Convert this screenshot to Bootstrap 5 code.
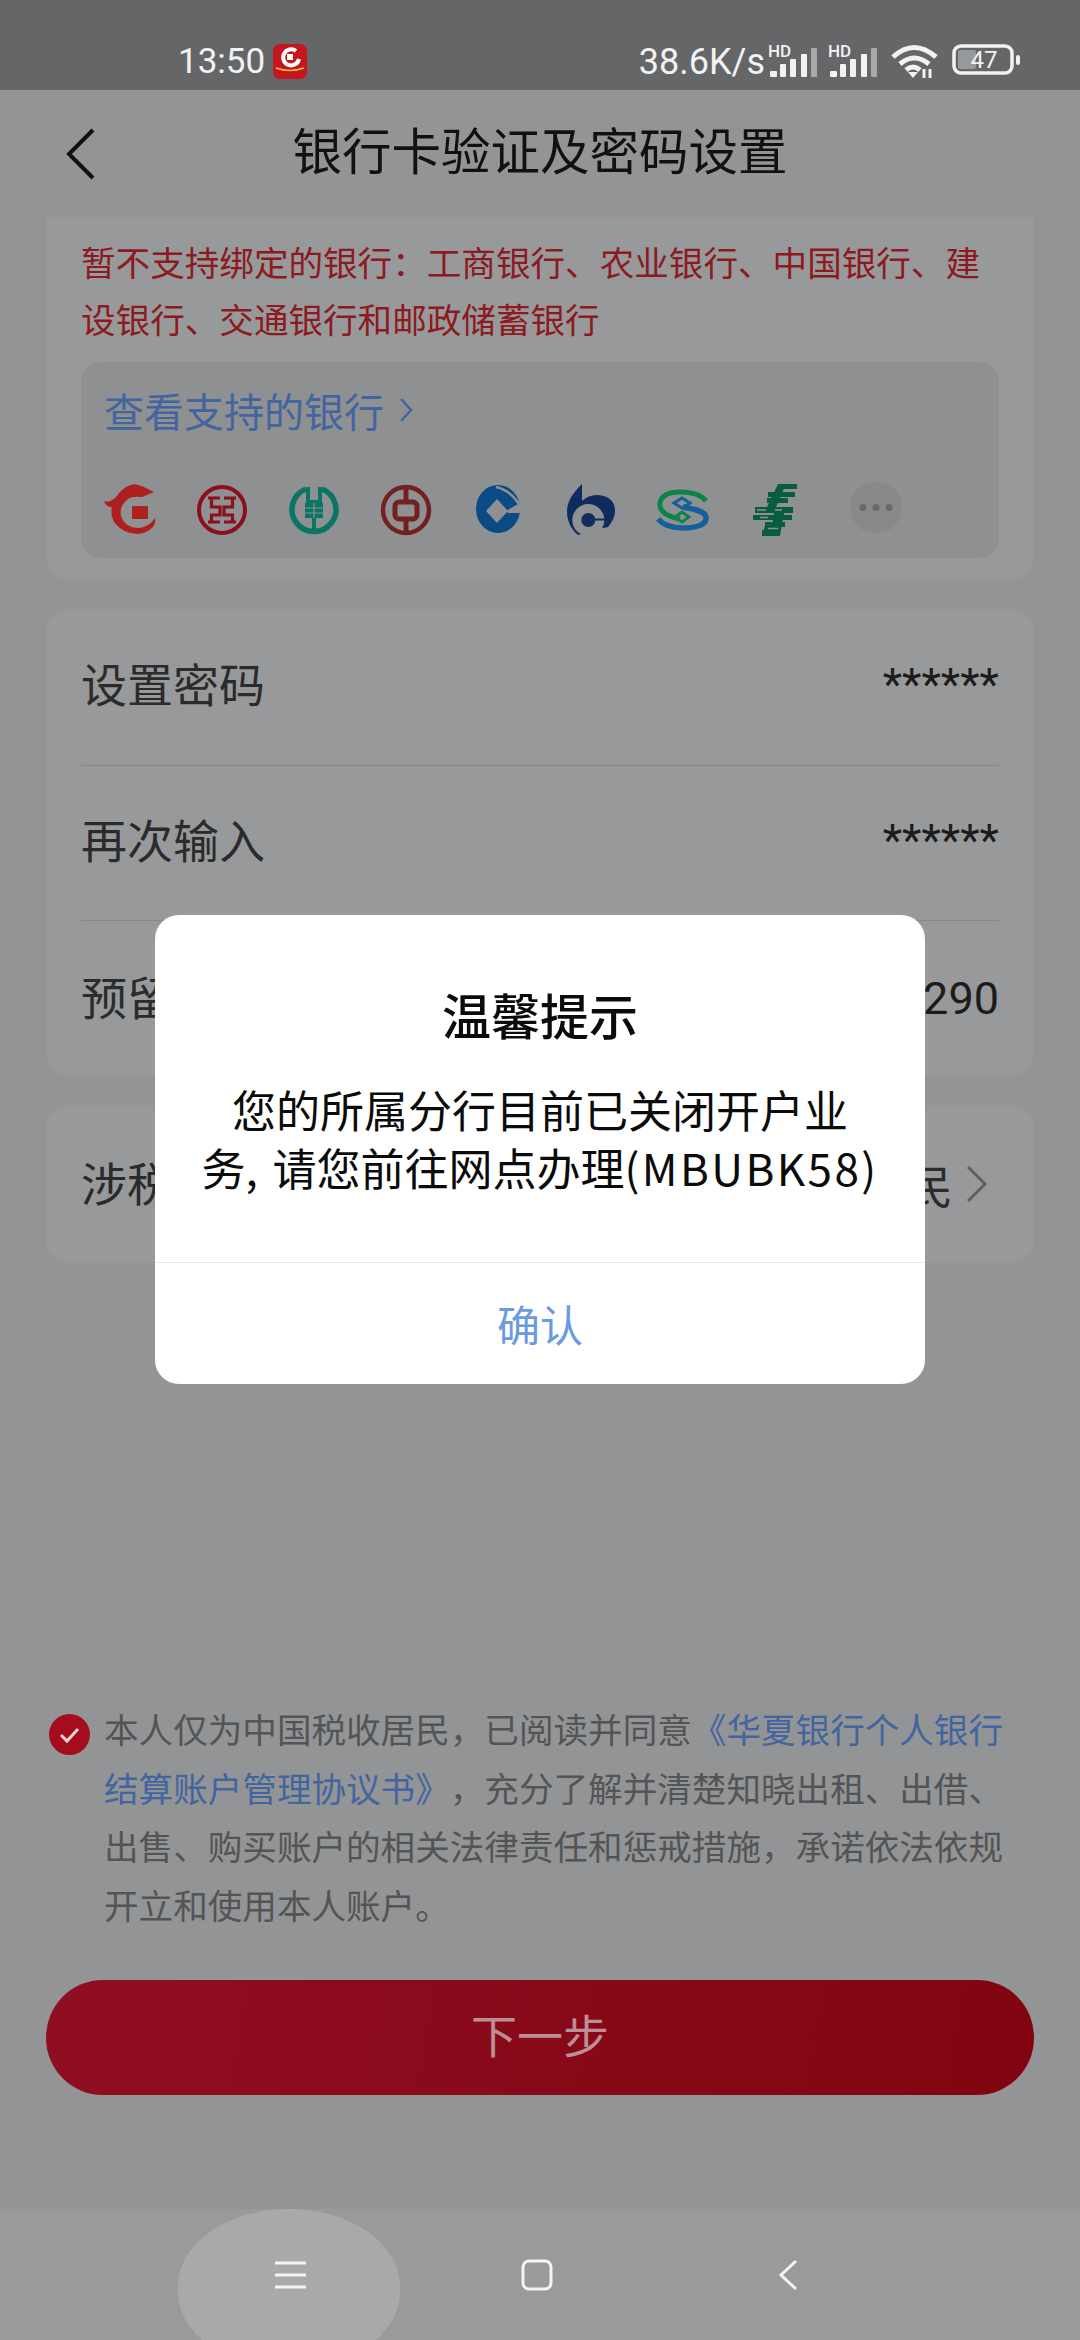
<!DOCTYPE html>
<html lang="zh-CN">

<head>
  <meta charset="UTF-8">
  <title>银行卡验证及密码设置</title>
  <link href="https://cdn.jsdelivr.net/npm/bootstrap@5.3.0/dist/css/bootstrap.min.css" rel="stylesheet">
  <style>
    body {
      background: #939495;
      font-family: "Noto Sans CJK SC", "Noto Sans", sans-serif;
      color: #2b2b2c;
      text-spacing-trim: space-all;
    }

    .screen {
      height: 2340px;
      width: 1080px;
      overflow: hidden;
    }

    .status-bar {
      height: 90px;
      background: #656668;
      color: #f2f2f2;
      font-family: Roboto, sans-serif;
      font-size: 35px;
      padding: 40px 60px 0 178px;
      line-height: 44px;
    }

    .status-bar svg {
      margin-top: 4px;
      overflow: visible;
    }

    .status-speed {
      font-size: 36px;
      margin-right: 3px;
      white-space: nowrap;
    }

    .sig-second {
      margin-left: 11px;
    }

    .wifi-mark {
      margin-left: 14px;
    }

    .battery-mark {
      margin-left: 15px;
    }

    .top-head {
      height: 127px;
      padding-left: 66px;
    }

    .top-title {
      flex-grow: 1;
      font-size: 49.5px;
      line-height: 60px;
      color: #111;
      margin: 0;
      text-align: center;
      padding-right: 95px;
      padding-bottom: 9px;
    }

    .box-card {
      background: #98999b;
      border: 0;
      border-radius: 24px;
      margin: 0 46px 29px;
      padding: 0 35px;
    }

    .box-first {
      border-radius: 0 0 24px 24px;
      padding: 16px 35px 22px;
      height: 363px;
    }

    .warn-text {
      font-size: 34.6px;
      line-height: 57px;
      color: #8c1a20;
    }

    .bank-box {
      background: #8f9092;
      border-radius: 20px;
      height: 196px;
      margin-top: 15px;
      padding: 20px 23px 0;
    }

    .bank-link {
      font-size: 40px;
      line-height: 56px;
      color: #43659f;
    }

    .bank-link svg {
      margin-left: 15px;
    }

    .bank-icons {
      gap: 40px;
      margin-top: 46px;
    }

    .bank-icons svg {
      width: 52px;
      height: 52px;
      flex: none;
      overflow: visible;
    }

    .form-line {
      height: 155px;
      font-size: 46px;
      border-bottom: 1px solid #868789;
      padding-bottom: 4px;
    }

    .form-line:first-child {
      height: 157px;
    }

    .form-line:last-child {
      border-bottom: 0;
      padding-bottom: 0;
    }

    .form-line:only-child {
      height: 158px;
    }

    .form-name {
      margin-bottom: 6px;
    }

    .form-value {
      font-family: Roboto, sans-serif;
      font-size: 45px;
      color: #1c1c1c;
    }

    .tax-arrow {
      margin: 0 11px 0 13px;
    }

    .agree-block {
      margin: 407px 46px 0 49px;
      font-size: 34.6px;
      line-height: 58.5px;
      color: #535456;
      gap: 14px;
    }

    .agree-link {
      color: #43659f;
      text-decoration: none;
    }

    .agree-check {
      width: 41px;
      height: 41px;
      flex: none;
      margin-top: 15px;
    }

    .next-btn {
      display: block;
      width: 988px;
      height: 115px;
      margin: 47px 46px 0;
      padding-bottom: 10px;
      border: 0;
      border-radius: 57px;
      background: linear-gradient(100deg, #900e22, #800510);
      color: #bb8f95;
      font-size: 46px;
    }

    .nav-bottom {
      height: 131px;
      margin-top: auto;
      background: #9a9a9a;
      position: relative;
    }

    .nav-slot {
      position: absolute;
      top: 0;
      bottom: 0;
    }

    .nav-pill {
      left: 178px;
      width: 222px;
      height: 160px;
      bottom: auto;
      background: #a9a9a9;
      border-radius: 50% / 48%;
    }

    .notice {
      position: absolute;
      left: 155px;
      top: 915px;
      width: 770px;
      height: 469px;
      border: 0;
      border-radius: 24px;
      background: #fff;
      color: #0b0b0b;
      text-align: center;
    }

    .notice-title {
      font-size: 49px;
      font-weight: 500;
      line-height: 60px;
      padding-top: 69px;
    }

    .notice-body {
      font-size: 44px;
      line-height: 58px;
      padding-top: 36px;
      height: 218px;
    }

    .notice-latin {
      letter-spacing: 2.4px;
    }

    .notice-comma {
      margin-right: 5px;
    }

    .notice-action {
      border-top: 1px solid #e9e9e9;
      color: #6b9ade;
      font-size: 43px;
      height: 122px;
    }
  </style>
</head>

<body>
  <div class="screen d-flex flex-column position-relative">
    <div class="status-bar d-flex align-items-start">
      <span>13:50</span>
      <svg width="34" height="35" viewBox="0 0 34 35" class="ms-2">
        <rect width="34" height="35" rx="7" fill="#c4161c" />
        <path d="M23 7A8 8 0 1 0 26 15" fill="none" stroke="#fff" stroke-width="4" />
        <rect x="14" y="10" width="6" height="6" fill="#fff" />
        <path d="M3 24Q17 29 31 24" fill="none" stroke="#f0c34a" stroke-width="1.5" />
      </svg>
      <span class="status-speed ms-auto">38.6K/s</span>
      <svg width="49" height="34" viewBox="0 0 49 34">
        <text x="0" y="13" font-family="Roboto, sans-serif" font-size="17" font-weight="500" fill="#f2f2f2">HD</text>
        <g fill="#f2f2f2">
          <rect x="2" y="27" width="7" height="6" rx="1" />
          <rect x="12" y="20" width="6" height="13" rx="1" />
          <rect x="22" y="15" width="6" height="18" rx="1" />
          <rect x="33" y="10" width="6" height="23" rx="1" />
          <rect x="43" y="4" width="6" height="29" rx="1" fill="#a9a9ab" />
        </g>
      </svg>
      <svg width="49" height="34" viewBox="0 0 49 34" class="sig-second">
        <text x="0" y="13" font-family="Roboto, sans-serif" font-size="17" font-weight="500" fill="#f2f2f2">HD</text>
        <g fill="#f2f2f2">
          <rect x="2" y="27" width="7" height="6" rx="1" />
          <rect x="12" y="20" width="6" height="13" rx="1" />
          <rect x="22" y="15" width="6" height="18" rx="1" />
          <rect x="33" y="10" width="6" height="23" rx="1" />
          <rect x="43" y="4" width="6" height="29" rx="1" fill="#a9a9ab" />
        </g>
      </svg>
      <svg width="46" height="34" viewBox="0 0 46 34" class="wifi-mark">
        <g fill="none" stroke="#f2f2f2" stroke-width="5">
          <path d="M2 13Q23 -6 45 13" />
          <path d="M9 20Q23 8 38 20" />
          <path d="M15 26Q22 20 29 26" />
        </g>
        <path d="M17 28L22 34L27 28Z" fill="#f2f2f2" />
        <path d="M33 25V34M39 25V34" stroke="#f2f2f2" stroke-width="3" />
      </svg>
      <svg width="68" height="32" viewBox="0 0 68 32" class="battery-mark">
        <rect x="2" y="2" width="58" height="27" rx="7" fill="none" stroke="#f2f2f2" stroke-width="3.5" />
        <rect x="6" y="6" width="18" height="19" rx="2" fill="#98999b" />
        <text x="32" y="24" text-anchor="middle" font-family="Roboto, sans-serif" font-size="24" fill="#f2f2f2">47</text>
        <rect x="64" y="11" width="4" height="10" rx="2" fill="#f2f2f2" />
      </svg>
    </div>

    <div class="top-head d-flex align-items-center">
      <svg width="29" height="52" viewBox="0 0 29 52">
        <path d="M27 2L3 26L27 50" fill="none" stroke="#111" stroke-width="4" />
      </svg>
      <h1 class="top-title fw-normal">银行卡验证及密码设置</h1>
    </div>

    <div class="box-card box-first card">
      <div class="warn-text">暂不支持绑定的银行：工商银行、农业银行、中国银行、建设银行、交通银行和邮政储蓄银行</div>
      <div class="bank-box">
        <div class="bank-link d-flex align-items-center">查看支持的银行
          <svg width="14" height="26" viewBox="0 0 14 26">
            <path d="M2 2L12 13L2 24" fill="none" stroke="#43659f" stroke-width="2.5" />
          </svg>
        </div>
        <div class="bank-icons d-flex align-items-center">
          <!-- 华夏 -->
          <svg viewBox="0 0 52 52">
            <path fill="#ae2020" d="M0 17Q8 20 15 9Q22 1 31 0L40 3L50 8L38 13Q28 12 24 15Q15 22 17 32Q21 44 35 44Q45 43 51 34Q52 40 49 43Q42 50 33 50Q18 49 10 38Q6 30 8 23Q3 24 0 17Z" />
            <rect x="28" y="22" width="16" height="13" rx="1" fill="#ae2020" />
          </svg>
          <!-- 工行 -->
          <svg viewBox="0 0 52 52">
            <circle cx="26" cy="26" r="23" fill="none" stroke="#8c0f1b" stroke-width="4" />
            <path d="M12 14H24M15.5 14V23H24V31H15.5V38M12 38H24M40 14H28M36.5 14V23H28V31H36.5V38M40 38H28" fill="none" stroke="#8c0f1b" stroke-width="3.2" />
          </svg>
          <!-- 农行 -->
          <svg viewBox="0 0 52 52">
            <path d="M18 5A22 22 0 1 0 34 5" fill="none" stroke="#0b7565" stroke-width="5.5" />
            <path d="M20 3V18H32V3M26 18V47" fill="none" stroke="#0b7565" stroke-width="4" />
            <rect x="17" y="19" width="18" height="15" fill="#0b7565" />
            <path d="M17 24H35M17 29H35M26 19V34" stroke="#8f9092" stroke-width="1.2" />
          </svg>
          <!-- 中行 -->
          <svg viewBox="0 0 52 52">
            <circle cx="26" cy="26" r="23" fill="none" stroke="#74201f" stroke-width="4.5" />
            <rect x="15" y="18" width="22" height="17" rx="4" fill="none" stroke="#74201f" stroke-width="5" />
            <path d="M26 3V18M26 35V49" stroke="#74201f" stroke-width="5" />
          </svg>
          <!-- 建行 -->
          <svg viewBox="0 0 52 52">
            <ellipse cx="26" cy="25" rx="22" ry="24" fill="#0a4a85" />
            <path d="M25 15L36 27L25 39L14 27Z" fill="#8f9092" />
            <path d="M24 3Q38 6 47 20" fill="none" stroke="#8f9092" stroke-width="2.5" />
            <path d="M34 27L46 20H52V29H36Z" fill="#8f9092" />
          </svg>
          <!-- 交行 -->
          <svg viewBox="0 0 52 52">
            <g transform="translate(0,-2)">
              <path fill="#0f2c5e" d="M18 2C10 10 3 18 3 30C3 40 8 48 14 53L30 48L44 45C50 38 51 33 51 28C51 18 42 13 33 13C27 13 22 15 18 19Z" />
              <circle cx="24.3" cy="38" r="16" fill="#8f9092" />
              <circle cx="24.3" cy="38" r="7" fill="#0f2c5e" />
              <path d="M29 37.5H46" stroke="#0f2c5e" stroke-width="2" />
            </g>
          </svg>
          <!-- 民生 -->
          <svg viewBox="0 0 52 52">
            <g transform="translate(0,-2)">
              <path d="M50 19C44 11 33 10 24 10C11 10 3 15 4 24C5 31 14 35 24 37" fill="none" stroke="#0e8348" stroke-width="5" />
              <path d="M2 37C8 44 18 46 27 46C42 46 51 42 50 35C49 29 38 27 27 25" fill="none" stroke="#14609f" stroke-width="5.5" />
              <path d="M26 16L34 21L26 26L18 21Z" fill="none" stroke="#14609f" stroke-width="3" />
              <path d="M26 30L33 35L26 40L19 35Z" fill="none" stroke="#0e8348" stroke-width="3" />
            </g>
          </svg>
          <!-- 邮储 -->
          <svg viewBox="0 0 52 52">
            <g transform="translate(0,-2)">
              <g fill="#0a5c3e">
                <rect x="30" y="2" width="19" height="5" />
                <rect x="20" y="10" width="27" height="5" />
                <rect x="19" y="16" width="21" height="5" />
                <rect x="7" y="25" width="38" height="6" />
                <rect x="5" y="33" width="39" height="5" />
                <rect x="17" y="40" width="20" height="5" />
                <rect x="14" y="48" width="18" height="6" />
                <path d="M30 2H38L28 25H19ZM26 31H36L32 54H14L17 44H24Z" />
              </g>
              <path d="M9 28H18M27 28H34M12 35.5H20M20 46.5H30" stroke="#8f9092" stroke-width="1.5" />
            </g>
          </svg>
          <svg viewBox="0 0 52 52" class="ms-2">
            <circle cx="28" cy="23.5" r="26" fill="#88898a" />
            <g fill="#6a6a6b">
              <circle cx="15" cy="23.5" r="3.5" />
              <circle cx="28" cy="23.5" r="3.5" />
              <circle cx="41" cy="23.5" r="3.5" />
            </g>
          </svg>
        </div>
      </div>
    </div>

    <div class="box-card card">
      <div class="form-line d-flex justify-content-between align-items-center">
        <span class="form-name">设置密码</span><span class="form-value">******</span>
      </div>
      <div class="form-line d-flex justify-content-between align-items-center">
        <span class="form-name">再次输入</span><span class="form-value">******</span>
      </div>
      <div class="form-line d-flex justify-content-between align-items-center">
        <span class="form-name">预留手机号</span><span class="form-value">1290</span>
      </div>
    </div>

    <div class="box-card card">
      <div class="form-line d-flex justify-content-between align-items-center">
        <span class="form-name">涉税居民身份</span>
        <span class="d-flex align-items-center">仅为中国税收居民
          <svg class="tax-arrow" width="22" height="38" viewBox="0 0 22 38">
            <path d="M2 2L19 19L2 36" fill="none" stroke="#5f6062" stroke-width="3" />
          </svg>
        </span>
      </div>
    </div>

    <div class="agree-block d-flex">
      <svg class="agree-check" viewBox="0 0 41 41">
        <circle cx="20.5" cy="20.5" r="20.5" fill="#a30d1c" />
        <path d="M12 21L18 27L29 15" fill="none" stroke="#e9d3d5" stroke-width="3" />
      </svg>
      <div>本人仅为中国税收居民，已阅读并同意<a class="agree-link" href="#">《华夏银行个人银行结算账户管理协议书》</a>，充分了解并清楚知晓出租、出借、出售、购买账户的相关法律责任和惩戒措施，承诺依法依规开立和使用本人账户。</div>
    </div>

    <button class="next-btn" type="button">下一步</button>

    <div class="nav-bottom">
      <div class="nav-slot nav-pill"></div>
      <div class="nav-slot d-flex align-items-center" style="left:275px">
        <svg width="31" height="28" viewBox="0 0 31 28">
          <path d="M0 2H31M0 14H31M0 26H31" stroke="#f4f4f4" stroke-width="3" />
        </svg>
      </div>
      <div class="nav-slot d-flex align-items-center" style="left:521px">
        <svg width="32" height="32" viewBox="0 0 32 32">
          <rect x="2" y="2" width="28" height="28" rx="6" fill="none" stroke="#f4f4f4" stroke-width="3" />
        </svg>
      </div>
      <div class="nav-slot d-flex align-items-center" style="left:778px">
        <svg width="20" height="32" viewBox="0 0 20 32">
          <path d="M18 2L3 16L18 30" fill="none" stroke="#f4f4f4" stroke-width="3" />
        </svg>
      </div>
    </div>

    <div class="notice card">
      <div class="notice-title">温馨提示</div>
      <div class="notice-body">您的所属分行目前已关闭开户业<br>务<span class="notice-comma">,</span> 请您前往网点办理<span class="notice-latin">(MBUBK58)</span></div>
      <div class="notice-action d-flex align-items-center justify-content-center">确认</div>
    </div>
  </div>

  <script src="https://cdn.jsdelivr.net/npm/bootstrap@5.3.0/dist/js/bootstrap.bundle.min.js"></script>
</body>

</html>
